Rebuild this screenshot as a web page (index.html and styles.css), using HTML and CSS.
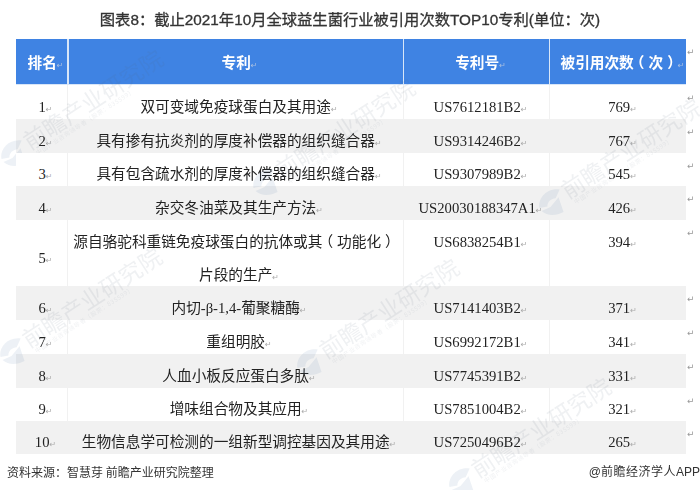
FILE: index.html
```html
<!DOCTYPE html>
<html lang="zh">
<head>
<meta charset="utf-8">
<title>图表8</title>
<link rel="stylesheet" href="styles.css">
</head>
<body>
<div class="page">
  <h1 class="title">图表8：截止2021年10月全球益生菌行业被引用次数TOP10专利(单位：次)</h1>
  <table class="patents">
    <colgroup><col class="c1"><col class="c2"><col class="c3"><col class="c4"><col class="c5"></colgroup>
    <thead>
      <tr><th>排名<i>↵</i></th><th>专利<i>↵</i></th><th>专利号<i>↵</i></th><th>被引用次数<span class="pl">（</span>次<span class="pr">）</span><i>↵</i></th><td class="mk">↵</td></tr>
    </thead>
    <tbody>
      <tr class="h34"><td>1<i>↵</i></td><td>双可变域免疫球蛋白及其用途<i>↵</i></td><td>US7612181B2<i>↵</i></td><td>769<i>↵</i></td><td class="mk">↵</td></tr>
      <tr class="h34 alt"><td>2<i>↵</i></td><td>具有掺有抗炎剂的厚度补偿器的组织缝合器<i>↵</i></td><td>US9314246B2<i>↵</i></td><td>767<i>↵</i></td><td class="mk">↵</td></tr>
      <tr class="h33 solid"><td>3<i>↵</i></td><td>具有包含疏水剂的厚度补偿器的组织缝合器<i>↵</i></td><td>US9307989B2<i>↵</i></td><td>545<i>↵</i></td><td class="mk">↵</td></tr>
      <tr class="h34 alt"><td>4<i>↵</i></td><td>杂交冬油菜及其生产方法<i>↵</i></td><td>US20030188347A1<i>↵</i></td><td>426<i>↵</i></td><td class="mk">↵</td></tr>
      <tr class="h66"><td>5<i>↵</i></td><td class="up"><div class="two"><span class="line1">源自骆驼科重链免疫球蛋白的抗体或其<span class="pl">（</span>功能化<span class="pr">）</span></span>片段的生产<i>↵</i></div></td><td class="up">US6838254B1<i>↵</i></td><td class="up">394<i>↵</i></td><td class="mk">↵</td></tr>
      <tr class="h34 alt"><td>6<i>↵</i></td><td>内切-β-1,4-葡聚糖酶<i>↵</i></td><td>US7141403B2<i>↵</i></td><td>371<i>↵</i></td><td class="mk">↵</td></tr>
      <tr class="h34"><td>7<i>↵</i></td><td>重组明胶<i>↵</i></td><td>US6992172B1<i>↵</i></td><td>341<i>↵</i></td><td class="mk">↵</td></tr>
      <tr class="h34 alt"><td>8<i>↵</i></td><td>人血小板反应蛋白多肽<i>↵</i></td><td>US7745391B2<i>↵</i></td><td>331<i>↵</i></td><td class="mk">↵</td></tr>
      <tr class="h33"><td>9<i>↵</i></td><td>增味组合物及其应用<i>↵</i></td><td>US7851004B2<i>↵</i></td><td>321<i>↵</i></td><td class="mk">↵</td></tr>
      <tr class="h33 alt"><td>10<i>↵</i></td><td>生物信息学可检测的一组新型调控基因及其用途<i>↵</i></td><td>US7250496B2<i>↵</i></td><td>265<i>↵</i></td><td class="mk">↵</td></tr>
    </tbody>
  </table>
  <div class="footer"><span>资料来源：智慧芽 前瞻产业研究院整理</span><span class="credit">@<span class="credit-cjk">前瞻经济学人</span>APP</span></div>
  <div class="wm w1"><svg viewBox="0 0 40 40"><path d="M2 15C6 4 24-3 38 9L27 16C22 13 15 14 12 19Z"/><path d="M15 22L31 17L26 37C14 36 5 30 2 20Z"/></svg><div><b>前瞻产业研究院</b><small>中国产业咨询领导者（股票：835599）</small></div></div>
  <div class="wm w2"><svg viewBox="0 0 40 40"><path d="M2 15C6 4 24-3 38 9L27 16C22 13 15 14 12 19Z"/><path d="M15 22L31 17L26 37C14 36 5 30 2 20Z"/></svg><div><b>前瞻产业研究院</b><small>中国产业咨询领导者（股票：835599）</small></div></div>
  <div class="wm w3"><svg viewBox="0 0 40 40"><path d="M2 15C6 4 24-3 38 9L27 16C22 13 15 14 12 19Z"/><path d="M15 22L31 17L26 37C14 36 5 30 2 20Z"/></svg><div><b>前瞻产业研究院</b><small>中国产业咨询领导者（股票：835599）</small></div></div>
  <div class="wm w4"><svg viewBox="0 0 40 40"><path d="M2 15C6 4 24-3 38 9L27 16C22 13 15 14 12 19Z"/><path d="M15 22L31 17L26 37C14 36 5 30 2 20Z"/></svg><div><b>前瞻产业研究院</b><small>中国产业咨询领导者（股票：835599）</small></div></div>
  <div class="wm w5"><svg viewBox="0 0 40 40"><path d="M2 15C6 4 24-3 38 9L27 16C22 13 15 14 12 19Z"/><path d="M15 22L31 17L26 37C14 36 5 30 2 20Z"/></svg><div><b>前瞻产业研究院</b><small>中国产业咨询领导者（股票：835599）</small></div></div>
  <div class="wm w6"><svg viewBox="0 0 40 40"><path d="M2 15C6 4 24-3 38 9L27 16C22 13 15 14 12 19Z"/><path d="M15 22L31 17L26 37C14 36 5 30 2 20Z"/></svg><div><b>前瞻产业研究院</b><small>中国产业咨询领导者（股票：835599）</small></div></div>
</div>
</body>
</html>
```
FILE: styles.css
```css
* { box-sizing: border-box; }
html, body { margin: 0; padding: 0; background: #fff; }
.page { position: relative; width: 700px; height: 490px; overflow: hidden; font-family: "Liberation Serif", "Noto Sans CJK SC", serif; color: #222; filter: blur(.3px); }
.title { margin: 0; height: 39px; padding: 11px 0 0 0; text-align: center; font-family: "Liberation Sans", "Noto Sans CJK SC", sans-serif; font-size: 15.3px; line-height: 18px; font-weight: 400; -webkit-text-stroke: .3px #333; color: #333; white-space: nowrap; }
.patents { margin-left: 16px; width: 684px; border-collapse: separate; border-spacing: 0; table-layout: fixed; font-size: 14.67px; }
.c1 { width: 51px; } .c2 { width: 336px; } .c3 { width: 146px; } .c4 { width: 137px; } .c5 { width: 14px; }
.patents th { height: 46px; padding: 0 0 0 8px; background: #3f83e3; color: #fff; font-family: "Noto Sans CJK SC", sans-serif; font-size: 14.67px; line-height: 20px; font-weight: 700; border-left: 1px solid #d8e6f8; border-bottom: 1px solid #d8e6f8; text-align: center; }
.patents th:first-child { border-left: 0; padding-left: 8px; }
.patents th:nth-child(2) { border-left-width: 2px; padding-left: 7px; }
.patents th:nth-child(4) { padding-left: 9px; }
.patents td { padding: 9px 0 0 8px; text-align: center; vertical-align: middle; border-left: 1px solid #f1f1f1; white-space: nowrap; line-height: 20px; color: #222; }
.patents td:first-child { border-left: 0; padding-left: 8px; }
.patents td:nth-child(2) { padding-left: 7px; }
.patents td:nth-child(4) { padding-left: 9px; }
.patents i { font-style: normal; font-size: 8px; line-height: 0; color: #aaa; font-weight: 400; font-family: "DejaVu Sans", sans-serif; }
.patents th i { color: #a9bfe0; }
.patents .alt td { background: #f1f1f1; border-left-color: #f1f1f1; }
.patents .alt td.mk, .patents td.mk { background: none; border-left: 0; padding: 8px 0 0 1px; vertical-align: top; text-align: left; font-size: 9px; line-height: 10px; color: #999; font-family: "DejaVu Sans", sans-serif; }
.solid td:first-child { position: relative; z-index: 1; background: #fff; }
.h34 { height: 34px; } .h33 { height: 33px; } .h66 { height: 66px; }
.patents td.up { vertical-align: top; padding-top: 6px; line-height: 33px; }
.two { height: 60px; }
.line1 { display: block; margin-left: -9px; }
.pl, .pr { display: inline-block; }
.pl { transform: translateX(-4px); }
.pr { transform: translateX(4px); }
.footer { display: flex; justify-content: space-between; padding: 10px 0 0 7px; font-family: "Noto Sans CJK SC", sans-serif; font-size: 12px; line-height: 16px; color: #333; }
.credit { font-family: "Liberation Sans", "Noto Sans CJK SC", sans-serif; }
.credit-cjk { letter-spacing: .5px; }
.wm { position: absolute; display: flex; align-items: center; transform: rotate(-33deg); transform-origin: left center; opacity: .09; pointer-events: none; white-space: nowrap; font-family: "Noto Sans CJK SC", sans-serif; color: #54657a; }
.wm svg { width: 30px; height: 30px; fill: #3d6a9c; flex: none; }
.wm div { display: flex; flex-direction: column; }
.wm b { font-size: 23px; line-height: 23px; font-weight: 400; }
.wm small { font-size: 6px; line-height: 8px; padding-left: 4px; letter-spacing: .6px; }
.w1 { left: 2px; top: 147px; }
.w2 { left: 254px; top: 176px; }
.w3 { left: 540px; top: 196px; }
.w4 { left: 1px; top: 345px; }
.w5 { left: 298px; top: 356px; }
.w6 { left: 450px; top: 475px; }
```
